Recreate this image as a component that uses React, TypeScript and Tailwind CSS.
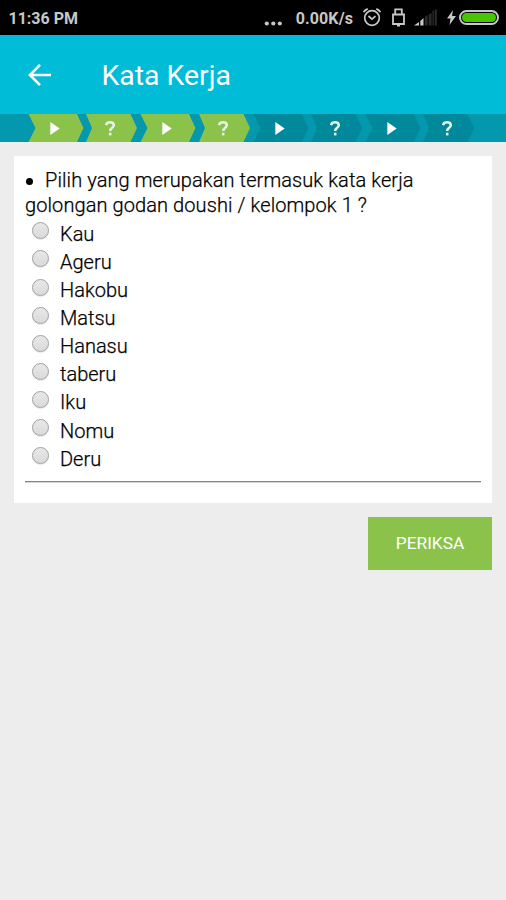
import { clsx } from 'clsx';

type StepKind = 'video' | 'quiz';

interface Step {
  kind: StepKind;
  done: boolean;
}

const steps: Step[] = [
  { kind: 'video', done: true },
  { kind: 'quiz', done: true },
  { kind: 'video', done: true },
  { kind: 'quiz', done: true },
  { kind: 'video', done: false },
  { kind: 'quiz', done: false },
  { kind: 'video', done: false },
  { kind: 'quiz', done: false },
];

const options = ['Kau', 'Ageru', 'Hakobu', 'Matsu', 'Hanasu', 'taberu', 'Iku', 'Nomu', 'Deru'];

function StatusBar() {
  return (
    <header className="flex h-[35px] items-center bg-black pl-[8.5px] pr-[7px] text-[16px] font-bold text-[#c8c8c8]">
      <span className="pt-[2px]">11:36 PM</span>
      <div className="ml-auto flex items-center">
        <svg className="mt-[11px] mr-[14px]" width="18" height="5" viewBox="0 0 18 5" fill="currentColor">
          <circle cx="2.8" cy="2.5" r="2.1" />
          <circle cx="9.3" cy="2.5" r="2.1" />
          <circle cx="15.8" cy="2.5" r="2.1" />
        </svg>
        <span className="mr-[10px] pt-[2px] tracking-[0.1px]">0.00K/s</span>
        {/* Alarm */}
        <svg className="mr-[11px]" width="18" height="19" viewBox="0 0 18 19" fill="none" stroke="currentColor" strokeWidth="1.7">
          <circle cx="9" cy="10" r="7.3" />
          <path d="M5.5 8l3.5 3.2L12.5 8.2M.5 4.2Q2.1 1.9 4.7.9M17.5 4.2Q15.9 1.9 13.3.9" />
        </svg>
        {/* USB */}
        <svg className="mr-[9px]" width="13" height="19" viewBox="0 0 13 19" fill="none" stroke="currentColor" strokeWidth="1.8">
          <path d="M3.2 6.5V1.3h6.6v5.2M1 6.5h11V16H1z" />
          <path d="M5 17.5h3" strokeWidth="2" />
        </svg>
        {/* Signal */}
        <svg className="mr-[10px]" width="23" height="17" viewBox="0 0 23 17" fill="currentColor">
          <path d="M0 16.5L5 13v3.5zM6.3 12l3.2-3v7.5H6.3z" />
          <path d="M10.8 8l2.8-2v10.5h-2.8zM14.7 5.5L17.5 4v12.5h-2.8zM18.5 2l1.3-1v15.5h-1.3zM20.8 1l2-1v16.5h-2z" fill="#2c2c2c" />
        </svg>
        {/* Charging */}
        <svg className="mr-[3px]" width="9" height="15" viewBox="0 0 9 15" fill="currentColor">
          <path d="M6 0L0 8.5h3.5L2.5 15 9 6H5z" />
        </svg>
        <div className="h-[15px] w-[40px] rounded-full border-2 border-[#c8c8c8] p-px">
          <div className="h-full rounded-full bg-[#48c400]" />
        </div>
      </div>
    </header>
  );
}

function StepIcon({ kind }: { kind: StepKind }) {
  if (kind === 'video') {
    return (
      <svg width="10" height="13" viewBox="0 0 10 13" fill="#fff">
        <path d="M.3 0L9.7 6.5.3 13z" />
      </svg>
    );
  }
  return (
    <svg width="10" height="15" viewBox="0 0 10 15" fill="none" stroke="#e6f2e8" strokeWidth="2.5">
      <path d="M1 4.3C1.4 2.2 3 1.3 5 1.3c2.4 0 3.8 1.1 3.8 2.9C8.8 6.8 5.2 6.8 5.2 10" />
      <path d="M5.2 11.7v2.7" />
    </svg>
  );
}

function StepItem({ kind, done }: Step) {
  return (
    <li className="relative flex h-[28px] w-[56.2px] items-center justify-center">
      <svg className="absolute inset-0" width="56" height="28" viewBox="0 0 56 28">
        <path
          d={kind === 'video' ? 'M.5 0H49L55.5 14 49 28H.5L7.5 14z' : 'M2 0H46.5L53 14 46.5 28H2L8 14z'}
          fill={done ? '#8bc34a' : '#00889b'}
        />
      </svg>
      <span className={clsx('relative', kind === 'video' ? 'pr-[2px]' : 'pr-[4px]')}>
        <StepIcon kind={kind} />
      </span>
    </li>
  );
}

function Option({ label }: { label: string }) {
  return (
    <label className="flex h-[28.1px] items-center pl-[7px]">
      <input
        type="radio"
        name="answer"
        className="mb-[6px] mr-[11px] size-[17px] shrink-0 appearance-none rounded-full border-[1.5px] border-[#a0a0a0] bg-linear-to-b from-[#e8e8e8] to-[#dadada] shadow-[0_1px_1px_#00000018]"
      />
      <span>{label}</span>
    </label>
  );
}

export default function App() {
  return (
    <div className="min-h-[900px] w-[506px] bg-[#ededed] font-['Roboto',sans-serif]">
      <StatusBar />
      <div className="flex h-[79px] items-center bg-[#00bcd6] pl-[28px] text-white">
        <svg width="23" height="22" viewBox="0 0 23 22" fill="none" stroke="currentColor" strokeWidth="2.6">
          <path d="M23 11H2M12 .9L1.9 11 12 21.1" />
        </svg>
        <h1 className="ml-[50.5px] pt-[3px] text-[28.4px] leading-8">Kata Kerja</h1>
      </div>
      <ol className="flex h-[28px] bg-[#0498ae] pl-[28px]">
        {steps.map((step, i) => (
          <StepItem key={i} {...step} />
        ))}
      </ol>
      <main className="px-[14px] pt-[14px]">
        <section className="h-[347px] bg-white px-[11px] pt-[12px] text-[20px] font-light text-black [-webkit-text-stroke:0.25px_black]">
          <div className="leading-[25px] tracking-[0.09px]">
            <span className="mr-[12.5px] ml-[0.5px] inline-block size-[7px] rounded-full bg-black align-[2px]" />
            <span>Pilih yang merupakan termasuk kata kerja</span>
            <br />
            <span>golongan godan doushi / kelompok 1 ?</span>
          </div>
          <div className="pt-[1.8px]">
            {options.map((label) => (
              <Option key={label} label={label} />
            ))}
          </div>
          <hr className="mt-[8.2px] h-[2px] border-0 border-t border-[#858585] bg-[#d5d5d5]" />
        </section>
        <div className="mt-[14px] flex justify-end">
          <button className="h-[53px] w-[124px] bg-[#8bc34a] pt-px text-[17.3px] text-white">PERIKSA</button>
        </div>
      </main>
    </div>
  );
}
